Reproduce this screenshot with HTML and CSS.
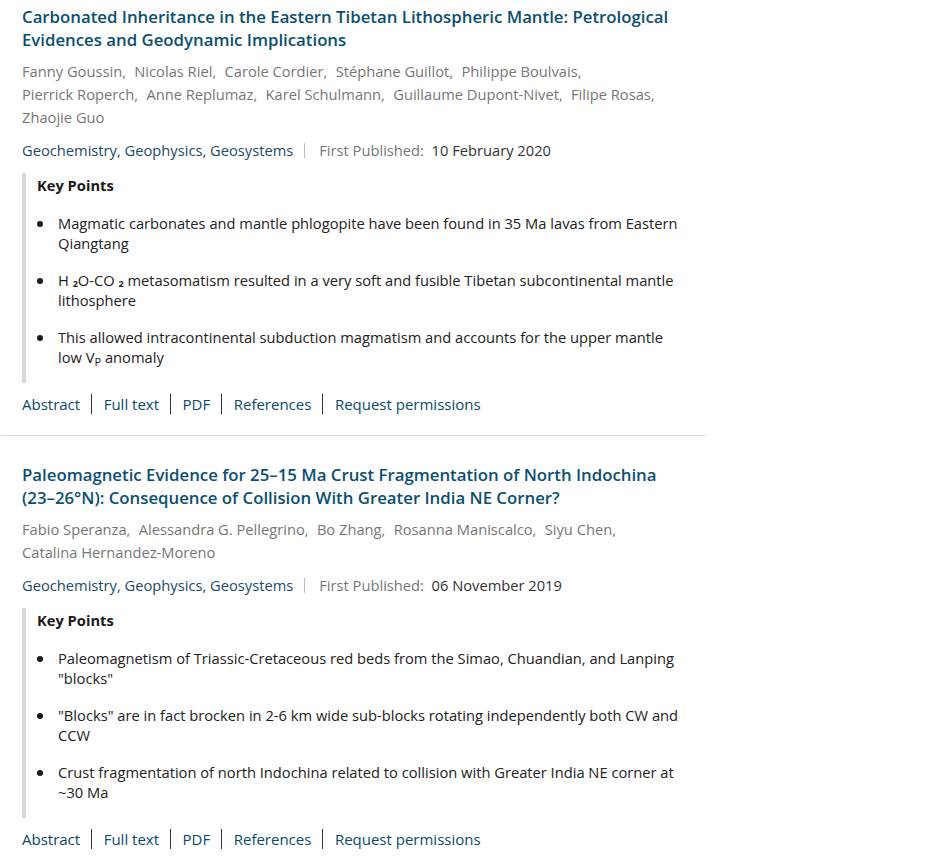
FILE: index.html
```html
<!DOCTYPE html>
<html>
<head>
<meta charset="utf-8">
<link rel="stylesheet" href="styles.css">
</head>
<body>
<div class="list">
  <div class="item first">
    <h2 class="title"><a href="#">Carbonated Inheritance in the Eastern Tibetan Lithospheric Mantle: Petrological Evidences and Geodynamic Implications</a></h2>
    <div class="authors">
      <span class="author">Fanny Goussin,</span>
      <span class="author">Nicolas Riel,</span>
      <span class="author">Carole Cordier,</span>
      <span class="author">Stéphane Guillot,</span>
      <span class="author">Philippe Boulvais,</span>
      <span class="author">Pierrick Roperch,</span>
      <span class="author">Anne Replumaz,</span>
      <span class="author">Karel Schulmann,</span>
      <span class="author">Guillaume Dupont-Nivet,</span>
      <span class="author">Filipe Rosas,</span>
      <span class="author">Zhaojie Guo</span>
    </div>
    <div class="meta">
      <a class="journal" href="#">Geochemistry, Geophysics, Geosystems</a>
      <span class="pub"><span class="pub-label">First Published:</span>&nbsp; <span class="pub-date">10 February 2020</span></span>
    </div>
    <div class="keypoints">
      <div class="kp-title">Key Points</div>
      <ul class="kp-list">
        <li>Magmatic carbonates and mantle phlogopite have been found in 35 Ma lavas from Eastern Qiangtang</li>
        <li>H <sub>2</sub>O-CO <sub>2</sub> metasomatism resulted in a very soft and fusible Tibetan subcontinental mantle lithosphere</li>
        <li>This allowed intracontinental subduction magmatism and accounts for the upper mantle low V<sub class="vp">P</sub> anomaly</li>
      </ul>
    </div>
    <div class="links">
      <a href="#">Abstract</a>
      <a href="#">Full text</a>
      <a href="#">PDF</a>
      <a href="#">References</a>
      <a href="#">Request permissions</a>
    </div>
  </div>
  <div class="item">
    <h2 class="title"><a href="#">Paleomagnetic Evidence for 25–15 Ma Crust Fragmentation of North Indochina (23–26°N): Consequence of Collision With Greater India NE Corner?</a></h2>
    <div class="authors">
      <span class="author">Fabio Speranza,</span>
      <span class="author">Alessandra G. Pellegrino,</span>
      <span class="author">Bo Zhang,</span>
      <span class="author">Rosanna Maniscalco,</span>
      <span class="author">Siyu Chen,</span>
      <span class="author">Catalina Hernandez-Moreno</span>
    </div>
    <div class="meta">
      <a class="journal" href="#">Geochemistry, Geophysics, Geosystems</a>
      <span class="pub"><span class="pub-label">First Published:</span>&nbsp; <span class="pub-date">06 November 2019</span></span>
    </div>
    <div class="keypoints">
      <div class="kp-title">Key Points</div>
      <ul class="kp-list">
        <li>Paleomagnetism of Triassic-Cretaceous red beds from the Simao, Chuandian, and Lanping "blocks"</li>
        <li>"Blocks" are in fact brocken in 2-6 km wide sub-blocks rotating independently both CW and CCW</li>
        <li>Crust fragmentation of north Indochina related to collision with Greater India NE corner at ~30 Ma</li>
      </ul>
    </div>
    <div class="links">
      <a href="#">Abstract</a>
      <a href="#">Full text</a>
      <a href="#">PDF</a>
      <a href="#">References</a>
      <a href="#">Request permissions</a>
    </div>
  </div>
</div>
</body>
</html>
```
FILE: styles.css
```css
* { box-sizing: border-box; }
html, body {
  margin: 0;
  padding: 0;
  background: #fff;
}
body {
  font-family: "Open Sans", "Liberation Sans", sans-serif;
  color: #222;
}
a { text-decoration: none; }
.list {
  width: 706px;
}
.item {
  padding: 27px 22px 21px 21px;
  border-bottom: 1px solid #dddddd;
  margin-left: 1px;
}
.item.first { padding-top: 5px; }
.item:last-child { border-bottom: none; }
.title {
  margin: 0;
  font-size: 16.8px;
  font-weight: 600;
  line-height: 23px;
}
.title a { color: #0a4f70; }
.authors {
  margin-top: 9px;
  font-size: 14.7px;
  line-height: 23px;
  color: #777;
}
.author { margin-right: 4.5px; white-space: nowrap; display: inline-block; }
.meta {
  margin-top: 11px;
  font-size: 14.7px;
  line-height: 20px;
  display: flex;
  align-items: center;
}
.journal { color: #1d4a68; }
.pub {
  display: inline-block;
  border-left: 1px solid #bbb;
  margin-left: 11px;
  padding-left: 14px;
  line-height: 15px;
  white-space: nowrap;
}
.pub-label { color: #777; }
.pub-date { color: #333; }
.keypoints {
  margin-top: 13px;
  border-left: 4px solid #d9d9d9;
  padding: 2px 0 16px 11px;
}
.kp-title {
  font-weight: 700;
  font-size: 14.7px;
  line-height: 20px;
  color: #1a1a1a;
}
.kp-list {
  list-style: none;
  margin: 18px 0 0 0;
  padding: 0 0 0 21px;
  font-size: 14.7px;
  line-height: 20px;
  color: #222;
}
.kp-list li { margin-bottom: 17px; }
.kp-list li:last-child { margin-bottom: 0; }
.kp-list li::before {
  content: "";
  display: inline-block;
  width: 6px;
  height: 6px;
  border-radius: 50%;
  background: #1a1a1a;
  margin-left: -21px;
  margin-right: 15px;
  vertical-align: 2px;
}
.kp-list sub {
  font-size: 9px;
  font-weight: 700;
  line-height: 0;
  vertical-align: -1px;
}
.kp-list sub.vp { font-weight: 400; font-size: 11px; vertical-align: -3px; }
.links {
  margin-top: 11px;
  display: flex;
  align-items: center;
  font-size: 15px;
  line-height: 20px;
}
.links a {
  color: #0b4a6a;
  padding: 0 10.5px 0 12px;
  border-left: 1px solid #333;
}
.links a:first-child { padding-left: 0; border-left: none; }
```
